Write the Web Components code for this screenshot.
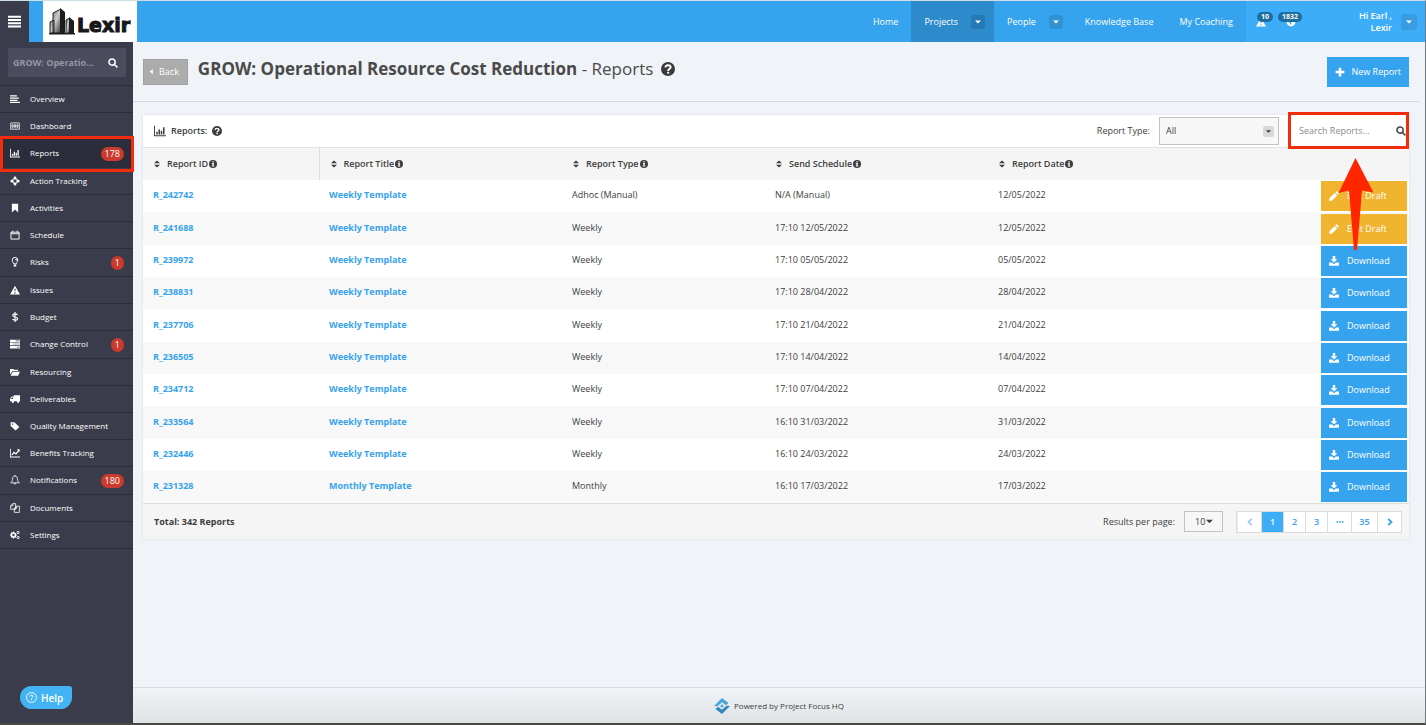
<!DOCTYPE html>
<html lang="en">
<head>
<meta charset="utf-8">
<meta name="viewport" content="width=device-width, initial-scale=1">
<title>Reports</title>
<style>
  * { box-sizing: border-box; }

  body {
    --blue: #36a3ee;
    --dark: #3b3c4b;
    --red: #f22c0d;
    margin: 0;
    min-height: 100vh;
    display: flex;
    flex-direction: column;
    border-top: 1px solid #cfdde4;
    border-right: 1px solid #74797d;
    border-bottom: 2px solid #4a4843;
    background: #f0f3f7;
    color: #3d3d3d;
    font: 9px/12px "Open Sans", sans-serif;
  }

  .shell {
    flex: 1;
    display: flex;
  }

  main {
    flex: 1;
    min-width: 0;
    display: flex;
    flex-direction: column;
  }

  reports-panel { margin: 13px 16px 0 10px; }
  page-footer { margin-top: auto; }
</style>
</head>
<body>
  <top-bar></top-bar>
  <div class="shell">
    <side-menu></side-menu>
    <main>
      <page-heading name="GROW: Operational Resource Cost Reduction" section="Reports"></page-heading>
      <reports-panel></reports-panel>
      <page-footer>Powered by Project Focus HQ</page-footer>
    </main>
  </div>

<script>
const icons = {
  bars: '<path d="M0 1h16v2.500H0zM0 5h16v2.500H0zM0 9h16v2.500H0zM0 13h16v2.500H0z"/>',
  search: '<path fill="none" stroke="currentColor" stroke-width="2.400" d="M11.500 6.500a5 5 0 1 1-10 0a5 5 0 1 1 10 0zM10 10l5 5"/>',
  align: '<path d="M0 2h11v2H0zM0 5.500h14v2H0zM0 9h12v2H0zM0 12.500h16v2H0z"/>',
  dashboard: '<path fill="none" stroke="currentColor" stroke-width="1.300" d="M2.500 3h11a2 2 0 0 1 2 2v8h-15V5a2 2 0 0 1 2-2zM3 6h2v4H3zM7 6h2v4H7zM11 6h2v4h-2z"/>',
  chart: '<path d="M0 1h1.300v12.700H16V15H0zM3 9h2v3.500H3zM6 6h2v6.500H6zM9 7.500h2v5H9zM12 3h2v9.500h-2z"/>',
  target: '<path fill="none" stroke="currentColor" stroke-width="1.500" d="M12 8a4 4 0 1 1-8 0a4 4 0 1 1 8 0z"/><path d="M8 0l3 3.500-2 1V6H7V4.500l-2-1zM8 16l3-3.500-2-1V10H7v1.500l-2 1zM0 8l3.500-3 1 2H6v2H4.500l-1 2zM16 8l-3.500-3-1 2H10v2h1.500l1 2z"/>',
  bookmark: '<path d="M3 1h10v14l-5-4.500L3 15z"/>',
  calendar: '<path fill="none" stroke="currentColor" stroke-width="1.500" d="M1.500 3.500h13v11h-13zM1.500 6h13M4.500 1v3M11.500 1v3"/>',
  bulb: '<path fill="none" stroke="currentColor" stroke-width="1.500" d="M6 11c0-2-2.500-3-2.500-6a4.500 4.500 0 0 1 9 0c0 3-2.500 4-2.500 6z"/><path d="M6 12h4v3H6zM8 3h3v2.500H9.500z"/>',
  warning: '<path fill-rule="evenodd" d="M8 1l8 14H0zM7 6l.4 4h1.200L9 6zM7 11.500v2h2v-2z"/>',
  dollar: '<path fill="none" stroke="currentColor" stroke-width="1.800" d="M12 4.500C11 3.300 9.600 3 8 3 6 3 4.500 4 4.500 5.400c0 3.600 7.500 1.500 7.500 5.200C12 12.200 10.300 13 8 13c-1.700 0-3.200-.5-4-1.700M8 0v16"/>',
  sliders: '<path fill-rule="evenodd" d="M0 1h16v4H0zM0 6h16v4H0zM0 11h16v4H0zM9 2.500v1h6v-1zM5 7.500v1h10v-1zM11 12.500v1h4v-1z"/>',
  folder: '<path d="M0 12V3h5l1.500 1.500H13v2H4zM4.500 7.500H16L13 14H1z"/>',
  truck: '<path fill-rule="evenodd" d="M6 2h10v9.500h-1a2 2 0 0 1-4 0H6.500a2 2 0 0 1-4 0H0V8l2.500-4H6zM3 5.500L1.500 8H5V5.500z"/><path d="M3 13a1.500 1.500 0 0 0 3 0M11.500 13a1.500 1.500 0 0 0 3 0"/>',
  tag: '<path fill-rule="evenodd" d="M1 2h6l8 7.500L9 15 1 8zM3 4v2h2V4z"/>',
  line: '<path d="M0 1h1.300v12.700H16V15H0z"/><path fill="none" stroke="currentColor" stroke-width="2" d="M3 11l3.500-4 3 2.500L14 4"/><path d="M11 2h4.500v4.500z"/>',
  bell: '<path fill="none" stroke="currentColor" stroke-width="1.300" d="M8 1.500C5 1.500 4 4 4 6.500 4 10 2.500 11 1 12.500h14C13.500 11 12 10 12 6.500 12 4 11 1.500 8 1.500zM6.500 13a1.500 1.500 0 0 0 3 0M8 0v2"/>',
  copy: '<path fill="none" stroke="currentColor" stroke-width="1.300" d="M4.500 1H9v9H1V4.500zM4.500 1v3.500H1M10.500 5H15v10H7V8.500zM10.500 5v3.500H7"/>',
  gears: '<circle cx="5.500" cy="8" r="3.200" fill="none" stroke="currentColor" stroke-width="2.600"/><path fill="none" stroke="currentColor" stroke-width="1.800" d="M5.500 2.500v2M5.500 11.500v2M0 8h2M9 8h2M1.700 4.200L3 5.500M9.300 11.800L8 10.500M1.700 11.800L3 10.500"/><circle cx="13" cy="4" r="1.800" fill="none" stroke="currentColor" stroke-width="1.500"/><circle cx="13" cy="12" r="1.800" fill="none" stroke="currentColor" stroke-width="1.500"/>',
  globe: '<path fill-rule="evenodd" d="M8 1a7 7 0 1 1 0 14A7 7 0 0 1 8 1zM5 3l1 2-3 3 3 1 1 4 2-4-2-3 3-1 1-3z"/>',
  caret: '<path d="M2 5h12l-6 6z"/>',
  caretLeft: '<path d="M11 2v12L4 8z"/>',
  sort: '<path d="M2 6.500h12L8 1zM2 9.500h12L8 15z"/>',
  plus: '<path d="M6 1h4v5h5v4h-5v5H6v-5H1V6h5z"/>',
  question: '<path fill-rule="evenodd" d="M8 0a8 8 0 1 1 0 16A8 8 0 0 1 8 0z"/><path fill="none" stroke="#fff" stroke-width="2.200" d="M5 6.200C5.200 4.500 6.400 3.700 8 3.700c1.700 0 3 .9 3 2.400C11 8 8.100 8 8.100 10.200"/><path fill="#fff" d="M7 11.200h2.300v2H7z"/>',
  info: '<circle cx="8" cy="8" r="8"/><path fill="#fff" d="M6.800 2.500h2.700v2.300H6.800zM5.500 6h4v5.500h1.300V13H5.500v-1.500h1.300v-4H5.500z"/>',
  pencil: '<path d="M0 16l1-5L9 3l4 4-8 8zM10 2l2-2 4 4-2 2z"/>',
  download: '<path fill-rule="evenodd" d="M6 0h4v5h3.500L8 10.500 2.500 5H6zM0 10.500h5L8 13l3-2.500h5v5H0z"/>',
  left: '<path fill="none" stroke="currentColor" stroke-width="3" d="M11.500 2L5 8l6.500 6"/>',
  right: '<path fill="none" stroke="currentColor" stroke-width="3.500" d="M4.500 2L11 8l-6.500 6"/>',
  dots: '<path d="M1 6.500h3.500v3H1zM6.200 6.500h3.500v3H6.200zM11.500 6.500H15v3h-3.500z"/>',
  help: '<circle cx="8" cy="8" r="7.200" fill="none" stroke="currentColor" stroke-width="1.300"/><path fill="none" stroke="currentColor" stroke-width="1.400" d="M5.800 6.500C5.900 5 6.800 4.400 8 4.400s2.200.8 2.200 2c0 1.500-2.200 1.500-2.200 3.200"/><path d="M7.200 10.600h1.600v1.600H7.200z"/>',
  hq: '<path fill="#4ba3dc" d="M8 0l6.500 5-2.500 2.300L8 4.200 3.500 8.300 0 8z"/><path fill="#2f86bd" d="M8 16l-6.500-5L4 8.700l4 3.100 4.500-4.100L16 8z"/><circle cx="8" cy="8" r="1.500" fill="#4ba3dc"/>'
};

// builds an open shadow root from a string of markup
function attach(el, html) {
  el.attachShadow({ mode: 'open' }).innerHTML =
    `<style>*, ::before, ::after { box-sizing: border-box; } button, input, select { font: inherit; }</style>${html}`;
}

class UiIcon extends HTMLElement {
  connectedCallback() {
    if (this.shadowRoot) return;
    attach(this, `
      <style>
        :host { display: inline-block; width: 10px; height: 10px; flex: none; }
        svg { display: block; width: 100%; height: 100%; }
      </style>
      <svg viewBox="0 0 16 16" fill="currentColor" aria-hidden="true">${icons[this.getAttribute('name')]}</svg>`);
  }
}

class LexirLogo extends HTMLElement {
  constructor() {
    super();
    attach(this, `
      <style>
        :host {
          display: flex;
          align-items: flex-end;
          width: 94px;
          padding: 0 5px 7px 6px;
          background: #fff;
          color: #16181a;
          font: bold 19px/20px "DejaVu Sans", sans-serif;
          -webkit-text-stroke: 1px #16181a;
        }
        svg { flex: none; width: 28px; height: 28px; }
      </style>
      <svg viewBox="0 0 28 28" aria-hidden="true">
        <defs>
          <linearGradient id="wall" x2="1" y2="1"><stop stop-color="#555"/><stop offset=".5" stop-color="#ccc"/><stop offset="1" stop-color="#333"/></linearGradient>
        </defs>
        <path fill="url(#wall)" stroke="#222" d="M1 26V15l4-2v13zM4 26V6l8-4v24z"/>
        <path fill="#1b1d1f" d="M11 1l5 4v22h-5zM0 26h26v1.500H0z"/>
        <path fill="url(#wall)" stroke="#222" d="M17 26V13l4-2v15z"/>
        <path fill="#1b1d1f" d="M20 10l5 4v13h-5z"/>
      </svg>
      <span>Lexir</span>`);
  }
}

class NavItem extends HTMLElement {
  constructor() {
    super();
    attach(this, `
      <style>
        :host { display: flex; align-items: center; gap: 13px; padding: 0 13px; }
        :host([menu]) { padding-right: 9px; }
        :host([active]) { background: #2d8acb; }
        a { color: #fff; text-decoration: none; white-space: nowrap; }
        button {
          display: none;
          width: 14px;
          height: 14px;
          padding: 3px;
          border: 0;
          border-radius: 3px;
          background: #2f90d2;
          color: #fff;
        }
        :host([menu]) button { display: block; }
        :host([active]) button { background: #2579b4; }
        ui-icon { display: block; width: 8px; height: 8px; }
      </style>
      <a href="#"><slot></slot></a>
      <button type="button" aria-label="Open menu"><ui-icon name="caret"></ui-icon></button>`);
  }
}

class TopBar extends HTMLElement {
  constructor() {
    super();
    attach(this, `
      <style>
        :host { display: flex; height: 41px; background: var(--blue); color: #fff; }
        .burger {
          width: 29px;
          margin-right: 14px;
          padding: 0 8px;
          border: 0;
          background: var(--dark);
          color: #fff;
        }
        .burger ui-icon { display: block; width: 13px; height: 13px; }
        nav { display: flex; margin-left: auto; }
        .user {
          display: flex;
          align-items: center;
          width: 179px;
          padding: 0 8px 0 10px;
          background: #3dadfa;
        }
        .alert {
          position: relative;
          display: block;
          width: 30px;
          height: 10px;
          color: #fff;
        }
        .alert b {
          position: absolute;
          left: 1px;
          bottom: 5px;
          padding: 0 4px;
          border-radius: 5px;
          background: #1f6c9f;
          font-size: 7px;
          line-height: 10px;
        }
        .alert.news b { left: -8px; }
        .who { margin-left: auto; text-align: right; font-weight: 600; }
        .user button {
          width: 16px;
          height: 16px;
          margin-left: 9px;
          padding: 4px;
          border: 0;
          border-radius: 3px;
          background: #379ce1;
          color: #fff;
        }
        .user button ui-icon { display: block; width: 8px; height: 8px; }
      </style>
      <button class="burger" type="button" aria-label="Toggle menu"><ui-icon name="bars"></ui-icon></button>
      <lexir-logo></lexir-logo>
      <nav>
        <nav-item>Home</nav-item>
        <nav-item menu active>Projects</nav-item>
        <nav-item menu>People</nav-item>
        <nav-item>Knowledge Base</nav-item>
        <nav-item>My Coaching</nav-item>
      </nav>
      <div class="user">
        <a class="alert" href="#"><ui-icon name="warning"></ui-icon><b>10</b></a>
        <a class="alert news" href="#"><ui-icon name="globe"></ui-icon><b>1832</b></a>
        <div class="who">Hi Earl ,<br>Lexir</div>
        <button type="button" aria-label="Account menu"><ui-icon name="caret"></ui-icon></button>
      </div>`);
  }
}

class SideItem extends HTMLElement {
  connectedCallback() {
    if (this.shadowRoot) return;
    const count = this.getAttribute('count');
    attach(this, `
      <style>
        :host { display: block; position: relative; border-top: 1px solid #2b2d3b; }
        :host([active]) { background: #2b2d3b; }
        /* marker drawn round the current entry */
        :host([active])::after {
          content: "";
          position: absolute;
          inset: -4px -1px -5px 0;
          z-index: 1;
          border: 3px solid var(--red);
        }
        a {
          display: flex;
          align-items: flex-start;
          height: 26px;
          padding: 7px 9px 0 10px;
          color: #fff;
          font-size: 8px;
          text-decoration: none;
        }
        :host([count]) a { height: 27px; }
        ui-icon { margin: 1px 10px 0 0; }
        b {
          margin: 0 0 0 auto;
          padding: 0 4px;
          border-radius: 7px;
          background: #cb3a2c;
          color: #fff;
          font-size: 9px;
          font-weight: 400;
          line-height: 14px;
        }
      </style>
      <a href="#"><ui-icon name="${this.getAttribute('icon')}"></ui-icon><slot></slot>${count ? `<b>${count}</b>` : ''}</a>`);
  }
}

class SideMenu extends HTMLElement {
  constructor() {
    super();
    attach(this, `
      <style>
        :host {
          display: flex;
          flex-direction: column;
          flex: none;
          width: 133px;
          padding-top: 6px;
          background: var(--dark);
        }
        form {
          display: flex;
          align-items: center;
          height: 29px;
          margin: 0 7px 8px 8px;
          padding: 0 8px 0 5px;
          background: #4c4c5f;
          color: #fff;
        }
        input {
          flex: 1;
          min-width: 0;
          padding: 0;
          border: 0;
          background: none;
          color: #9696a3;
          font-size: 9px;
          font-weight: 700;
        }
        form button { padding: 0; border: 0; background: none; color: #fff; }
        form ui-icon { display: block; }
        nav { border-bottom: 1px solid #2b2d3b; }
        .help {
          display: flex;
          align-items: center;
          gap: 4px;
          width: 52px;
          height: 23px;
          margin: auto 0 14px 20px;
          padding: 0 6px;
          border: 0;
          border-radius: 12px 3px 12px 12px;
          background: #44b3f4;
          color: #fff;
          font-size: 10px;
          font-weight: 600;
        }
        .help ui-icon { width: 11px; height: 11px; }
      </style>
      <form>
        <input type="text" aria-label="Project" value="GROW: Operatio...">
        <button type="button" aria-label="Search"><ui-icon name="search"></ui-icon></button>
      </form>
      <nav>
        <side-item icon="align">Overview</side-item>
        <side-item icon="dashboard">Dashboard</side-item>
        <side-item icon="chart" count="178" active>Reports</side-item>
        <side-item icon="target">Action Tracking</side-item>
        <side-item icon="bookmark">Activities</side-item>
        <side-item icon="calendar">Schedule</side-item>
        <side-item icon="bulb" count="1">Risks</side-item>
        <side-item icon="warning">Issues</side-item>
        <side-item icon="dollar">Budget</side-item>
        <side-item icon="sliders" count="1">Change Control</side-item>
        <side-item icon="folder">Resourcing</side-item>
        <side-item icon="truck">Deliverables</side-item>
        <side-item icon="tag">Quality Management</side-item>
        <side-item icon="line">Benefits Tracking</side-item>
        <side-item icon="bell" count="180">Notifications</side-item>
        <side-item icon="copy">Documents</side-item>
        <side-item icon="gears">Settings</side-item>
      </nav>
      <button class="help" type="button"><ui-icon name="help"></ui-icon>Help</button>`);
  }
}

class PageHeading extends HTMLElement {
  connectedCallback() {
    if (this.shadowRoot) return;
    attach(this, `
      <style>
        :host {
          display: flex;
          align-items: center;
          height: 60px;
          margin-right: 6px;
          padding: 0 10px;
          border-bottom: 1px solid #d3d9de;
        }
        button { display: flex; align-items: center; border: 0; color: #fff; }
        .back {
          gap: 4px;
          height: 26px;
          padding: 0 8px 0 4px;
          border: 1px solid #a0a0a0;
          background: #acacac;
        }
        .back ui-icon { width: 7px; height: 7px; }
        h1 {
          display: flex;
          align-items: center;
          gap: 8px;
          margin: 0 0 6px 10px;
          color: #4a4a4a;
          font-size: 17px;
          line-height: 24px;
          font-weight: 400;
        }
        h1 ui-icon { width: 14px; height: 14px; color: #3a3a3a; }
        .new { gap: 6px; height: 30px; margin-left: auto; padding: 0 8px; background: var(--blue); }
      </style>
      <button class="back" type="button"><ui-icon name="caretLeft"></ui-icon>Back</button>
      <h1><span><b>${this.getAttribute('name')}</b> - ${this.getAttribute('section')}</span><ui-icon name="question"></ui-icon></h1>
      <button class="new" type="button"><ui-icon name="plus"></ui-icon>New Report</button>`);
  }
}

class SearchBox extends HTMLElement {
  constructor() {
    super();
    attach(this, `
      <style>
        :host { position: relative; display: flex; align-items: center; width: 121px; height: 32px; padding: 0 3px 0 11px; }
        :host::after { content: ""; position: absolute; inset: -3px 0 -2px; border: 3px solid var(--red); pointer-events: none; }
        input { flex: 1; min-width: 0; padding: 0; border: 0; outline: 0; background: none; color: inherit; }
        input::placeholder { color: #8a8a8a; opacity: 1; }
        button { padding: 0; border: 0; background: none; color: #444; }
        ui-icon { display: block; }
        .arrow { position: absolute; top: 43px; left: 50px; z-index: 1; width: 36px; height: 92px; pointer-events: none; }
      </style>
      <input type="text" placeholder="Search Reports..." aria-label="Search reports">
      <button type="button" aria-label="Search"><ui-icon name="search"></ui-icon></button>
      <svg class="arrow" viewBox="0 0 36 92" aria-hidden="true"><path fill="#ff2600" d="M17.500 0L35.500 34.500 24 32.500 19 92h-3L11 32.500.5 35z"/></svg>`);
  }
}

class PageList extends HTMLElement {
  constructor() {
    super();
    attach(this, `
      <style>
        :host { display: flex; height: 22px; border: 1px solid #dcdcdc; background: #fff; }
        a {
          display: grid;
          place-items: center;
          width: 22px;
          border-left: 1px solid #dcdcdc;
          color: #3a9fe0;
          font-weight: 600;
          text-decoration: none;
        }
        a:first-child { border: 0; }
        .wide { width: 24px; }
        .last { width: 26px; }
        .here { background: #3dadf5; color: #fff; }
        .off { opacity: .6; }
        ui-icon { width: 8px; height: 8px; }
      </style>
      <a class="wide off" href="#" aria-label="Previous"><ui-icon name="left"></ui-icon></a>
      <a class="here" href="#">1</a>
      <a href="#">2</a>
      <a href="#">3</a>
      <a class="wide" href="#" aria-label="More"><ui-icon name="dots"></ui-icon></a>
      <a class="last" href="#">35</a>
      <a class="wide" href="#" aria-label="Next"><ui-icon name="right"></ui-icon></a>`);
  }
}

const reports = [
  ['R_242742', 'Weekly Template', 'Adhoc (Manual)', 'N/A (Manual)', '12/05/2022', 'draft'],
  ['R_241688', 'Weekly Template', 'Weekly', '17:10 12/05/2022', '12/05/2022', 'draft'],
  ['R_239972', 'Weekly Template', 'Weekly', '17:10 05/05/2022', '05/05/2022'],
  ['R_238831', 'Weekly Template', 'Weekly', '17:10 28/04/2022', '28/04/2022'],
  ['R_237706', 'Weekly Template', 'Weekly', '17:10 21/04/2022', '21/04/2022'],
  ['R_236505', 'Weekly Template', 'Weekly', '17:10 14/04/2022', '14/04/2022'],
  ['R_234712', 'Weekly Template', 'Weekly', '17:10 07/04/2022', '07/04/2022'],
  ['R_233564', 'Weekly Template', 'Weekly', '16:10 31/03/2022', '31/03/2022'],
  ['R_232446', 'Weekly Template', 'Weekly', '16:10 24/03/2022', '24/03/2022'],
  ['R_231328', 'Monthly Template', 'Monthly', '16:10 17/03/2022', '17/03/2022']
];

class ReportsTable extends HTMLElement {
  constructor() {
    super();
    const heads = ['Report ID', 'Report Title', 'Report Type', 'Send Schedule', 'Report Date'];
    attach(this, `
      <style>
        :host { display: block; }
        table { width: 100%; border-collapse: collapse; table-layout: fixed; }
        .c1 { width: 176px; }
        .c2 { width: 243px; }
        .c3 { width: 203px; }
        .c4 { width: 223px; }
        .c6 { width: 88px; }
        tr { height: 32px; }
        tbody tr:nth-child(3n + 2) { height: 33px; }
        tbody tr:nth-child(even) { background: #f8f8f8; }
        thead { background: #f5f5f5; }
        th { padding: 0 10px; text-align: left; font-weight: 600; white-space: nowrap; }
        th:first-child { border-right: 1px solid #ddd; }
        th div { display: flex; align-items: center; gap: 1px; }
        th ui-icon { width: 8px; height: 8px; }
        th ui-icon:first-child { margin-right: 5px; }
        td { padding: 0 10px 2px; white-space: nowrap; }
        td:last-child { padding: 0 2px 0 0; }
        .link { color: var(--blue); font-weight: 700; text-decoration: none; }
        .action {
          display: flex;
          align-items: center;
          gap: 8px;
          height: 30px;
          padding: 0 8px;
          background: var(--blue);
          color: #fff;
          text-decoration: none;
        }
        .action.draft { background: #f0b42f; }
      </style>
      <table>
        <colgroup><col class="c1"><col class="c2"><col class="c3"><col class="c4"><col><col class="c6"></colgroup>
        <thead>
          <tr>
            ${heads.map(h => `<th><div><ui-icon name="sort"></ui-icon>${h}<ui-icon name="info"></ui-icon></div></th>`).join('')}
            <th></th>
          </tr>
        </thead>
        <tbody>
          ${reports.map(([id, title, type, schedule, date, state]) => `
            <tr>
              <td><a class="link" href="#">${id}</a></td>
              <td><a class="link" href="#">${title}</a></td>
              <td>${type}</td>
              <td>${schedule}</td>
              <td>${date}</td>
              <td>${state
                ? '<a class="action draft" href="#"><ui-icon name="pencil"></ui-icon>Edit Draft</a>'
                : '<a class="action" href="#"><ui-icon name="download"></ui-icon>Download</a>'}</td>
            </tr>`).join('')}
        </tbody>
      </table>`);
  }
}

class ReportsPanel extends HTMLElement {
  constructor() {
    super();
    attach(this, `
      <style>
        :host { display: block; background: #fff; box-shadow: 0 0 2px #d5d9dd; }
        header, footer { display: flex; align-items: center; }
        header { height: 33px; padding-left: 11px; border-bottom: 1px solid #e2e2e2; }
        h2 { display: flex; align-items: center; gap: 5px; margin: 0 auto 0 0; font-size: 9px; font-weight: 600; }
        h2 ui-icon:first-child { width: 12px; height: 12px; }
        footer { height: 36px; padding: 0 7px 0 11px; border-top: 1px solid #ddd; background: #f5f5f5; }
        footer strong { margin-right: auto; }
        .pick { display: grid; align-items: center; margin: 0 9px; }
        .pick > * { grid-area: 1 / 1; }
        .pick ui-icon { justify-self: end; width: 11px; height: 11px; margin-right: 5px; padding: 2px; pointer-events: none; }
        .type ui-icon { border-radius: 2px; background: #d8d8d8; }
        select {
          appearance: none;
          height: 28px;
          padding: 0 6px;
          border: 1px solid #c2c2c2;
          border-radius: 0;
          background: #f7f7f7;
          color: inherit;
        }
        .type select { width: 120px; }
        .count { margin-right: 13px; }
        .count select { width: 39px; height: 21px; padding: 0 10px; }
        .count ui-icon { padding: 1px; margin-right: 8px; }
      </style>
      <header>
        <h2><ui-icon name="chart"></ui-icon>Reports:<ui-icon name="question"></ui-icon></h2>
        <label for="type">Report Type:</label>
        <div class="pick type">
          <select id="type"><option>All</option></select>
          <ui-icon name="caret"></ui-icon>
        </div>
        <search-box></search-box>
      </header>
      <reports-table></reports-table>
      <footer>
        <strong>Total: 342 Reports</strong>
        <label for="count">Results per page:</label>
        <div class="pick count">
          <select id="count"><option>10</option></select>
          <ui-icon name="caret"></ui-icon>
        </div>
        <page-list></page-list>
      </footer>`);
  }
}

class PageFooter extends HTMLElement {
  constructor() {
    super();
    attach(this, `
      <style>
        :host {
          display: flex;
          align-items: center;
          justify-content: center;
          gap: 4px;
          height: 36px;
          border-top: 1px solid #d6dbe0;
          background: linear-gradient(#f0f3f7, #e0e3e6);
          font-size: 8px;
        }
        ui-icon { width: 16px; height: 16px; }
      </style>
      <ui-icon name="hq"></ui-icon><slot></slot>`);
  }
}

customElements.define('ui-icon', UiIcon);
customElements.define('lexir-logo', LexirLogo);
customElements.define('nav-item', NavItem);
customElements.define('top-bar', TopBar);
customElements.define('side-item', SideItem);
customElements.define('side-menu', SideMenu);
customElements.define('page-heading', PageHeading);
customElements.define('search-box', SearchBox);
customElements.define('page-list', PageList);
customElements.define('reports-table', ReportsTable);
customElements.define('reports-panel', ReportsPanel);
customElements.define('page-footer', PageFooter);
</script>
</body>
</html>
